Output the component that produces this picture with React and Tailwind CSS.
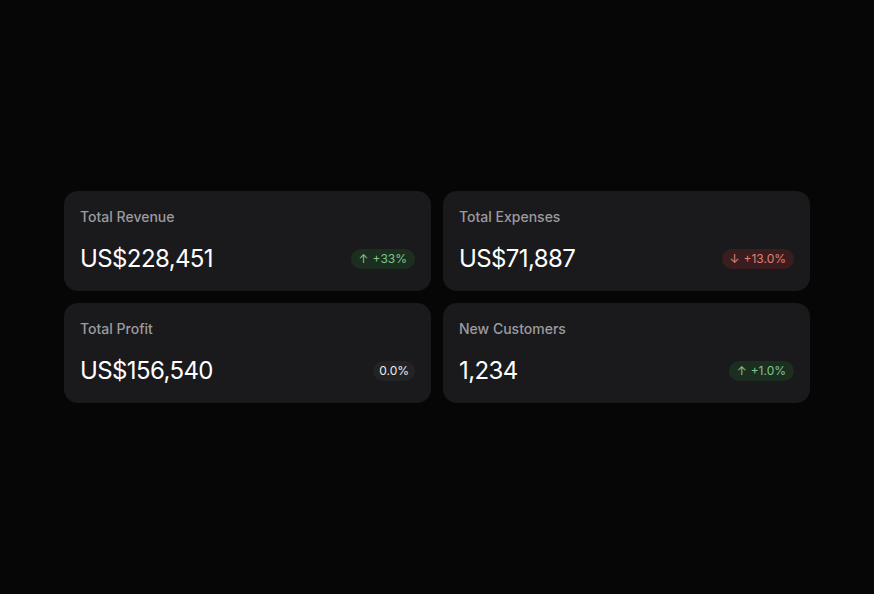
import React from "react";

const stats = [
  { title: "Total Revenue", value: "US$228,451", change: "+33%", dir: "up" },
  { title: "Total Expenses", value: "US$71,887", change: "+13.0%", dir: "down" },
  { title: "Total Profit", value: "US$156,540", change: "0.0%", dir: "none" },
  { title: "New Customers", value: "1,234", change: "+1.0%", dir: "up" },
];

function Badge({ dir, change }) {
  if (dir === "up") {
    return (
      <span className="inline-flex items-center gap-1 h-5 px-2 rounded-full bg-[#1c2e20] text-[#7fc68c] text-xs">
        <span>↑</span>
        <span>{change}</span>
      </span>
    );
  }
  if (dir === "down") {
    return (
      <span className="inline-flex items-center gap-1 h-5 px-2 rounded-full bg-[#3a1d1e] text-[#e0807a] text-xs">
        <span>↓</span>
        <span>{change}</span>
      </span>
    );
  }
  return (
    <span className="inline-flex items-center h-5 px-[6px] rounded-full bg-[#232325] text-[#ececec] text-xs">
      {change}
    </span>
  );
}

export default function App() {
  return (
    <div
      className="min-h-screen w-full bg-[#060606] flex items-center justify-center"
      style={{ fontFamily: "Inter, 'Noto Sans', sans-serif" }}
    >
      <div className="w-[746px] grid grid-cols-2 gap-3">
        {stats.map((s) => (
          <div key={s.title} className="h-[100px] rounded-[14px] bg-[#1a1a1c] p-4 flex flex-col gap-4">
            <div className="text-sm leading-5 font-medium text-[#9b9ba0]">{s.title}</div>
            <div className="flex items-center justify-between">
              <div className="text-2xl leading-8 tracking-tight text-white">{s.value}</div>
              <Badge dir={s.dir} change={s.change} />
            </div>
          </div>
        ))}
      </div>
    </div>
  );
}
